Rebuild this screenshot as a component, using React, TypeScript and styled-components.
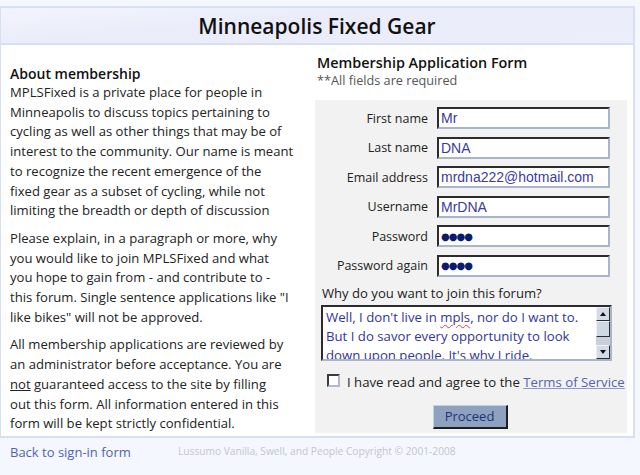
import React from 'react'
import styled, { createGlobalStyle } from 'styled-components'

const GlobalStyle = createGlobalStyle`
  body {
    margin: 0;
    background: #f4f7fd;
    font-family: 'Open Sans', 'Liberation Sans', sans-serif;
    font-size: 12.7px;
    color: #222;
  }
`

const Page = styled.div`
  width: 640px;
  height: 475px;
  padding-top: 6px;
  box-sizing: border-box;
`

const Header = styled.h1`
  margin: 0;
  width: 635px;
  height: 39px;
  box-sizing: border-box;
  border: 2px solid #d7dff2;
  border-left: 1px solid #d7dff2;
  background: linear-gradient(175deg, #f3f4fc 0%, #eaecfa 40%, #eceefb 100%);
  display: flex;
  align-items: center;
  justify-content: center;
  font-size: 21px;
  font-weight: 600;
  color: #111;
`

const Body = styled.div`
  display: flex;
  width: 635px;
  height: 393px;
  box-sizing: border-box;
  background: #fff;
  border: 2px solid #d7dff2;
  border-top: none;
  border-left: 1px solid #d7dff2;
`

const About = styled.div`
  flex: none;
  width: 314px;
  padding: 19px 0 0 9px;
  box-sizing: border-box;
  white-space: nowrap;
`

const Heading = styled.h2`
  margin: 0;
  font-size: 14px;
  font-weight: 600;
  color: #111;
  line-height: 19px;
`

const Para = styled.p`
  margin: 0 0 8px;
  font-size: 13.1px;
  line-height: 19.7px;
  color: #222;
`

const Underlined = styled.span`
  text-decoration: underline;
`

const FormColumn = styled.div`
  flex: 1;
  min-width: 0;
  padding: 8px 6px 0 0;
  display: flex;
  flex-direction: column;
`

const FormTitle = styled.h2`
  margin: 0 0 0 2px;
  font-size: 14.4px;
  font-weight: 600;
  color: #111;
  line-height: 20px;
`

const Note = styled.div`
  margin: 0 0 12px 2px;
  color: #555;
  line-height: 15px;
`

const Panel = styled.div`
  background: #f2f2f2;
  padding: 7px 8px 5px 6px;
  height: 333px;
  box-sizing: border-box;
`

const Fields = styled.div`
  display: grid;
  grid-template-columns: 107px 173px;
  column-gap: 9px;
  row-gap: 7.6px;
  align-items: center;
`

const Label = styled.label`
  text-align: right;
  font-size: 12.5px;
  color: #222;
`

const Field = styled.input<{ $secret?: boolean }>`
  height: 22px;
  width: 173px;
  box-sizing: border-box;
  border: 2px solid;
  border-color: #2c2c2c #a9b5c9 #a9b5c9 #2c2c2c;
  background: #fff;
  padding: 0 2px;
  font-family: ${p => (p.$secret ? "'DejaVu Sans', sans-serif" : "'Liberation Sans', Arial, sans-serif")};
  font-size: ${p => (p.$secret ? '10px' : '14px')};
  letter-spacing: ${p => (p.$secret ? '-1px' : '0')};
  color: ${p => (p.$secret ? '#0d1b6e' : '#3b3b9c')};
  outline: none;
`

const Question = styled.div`
  margin: 8px 0 4px 1px;
  font-size: 13.1px;
  color: #222;
  line-height: 16px;
`

const TextBox = styled.div`
  display: flex;
  width: 291px;
  height: 56px;
  box-sizing: border-box;
  border: 2px solid;
  border-color: #2c2c2c #a9b5c9 #a9b5c9 #2c2c2c;
  background: #fff;
  overflow: hidden;
`

const TextBody = styled.div`
  flex: 1;
  padding: 1px 3px 0;
  color: #34349a;
  line-height: 19px;
  font-size: 13.2px;
  white-space: nowrap;
  overflow: hidden;
`

const Typo = styled.span`
  text-decoration: underline wavy #e04040;
  text-decoration-thickness: 1px;
  text-underline-offset: 2px;
`

const ScrollBar = styled.div`
  width: 14px;
  display: flex;
  flex-direction: column;
  background: #c8d0dc;
`

const ScrollButton = styled.div<{ $down?: boolean }>`
  height: 14px;
  box-sizing: border-box;
  background: #d4dbe6;
  border: 1px solid;
  border-color: #eef1f6 #2c2c2c #2c2c2c #eef1f6;
  display: flex;
  align-items: center;
  justify-content: center;
  &::after {
    content: '';
    border-left: 3px solid transparent;
    border-right: 3px solid transparent;
    ${p => (p.$down ? 'border-top: 4px solid #111;' : 'border-bottom: 4px solid #111;')}
  }
`

const Thumb = styled.div`
  height: 16px;
  box-sizing: border-box;
  background: #cfd7e3;
  border: 1px solid;
  border-color: #eef1f6 #2c2c2c #2c2c2c #eef1f6;
`

const Track = styled.div`
  flex: 1;
`

const AgreeRow = styled.label`
  display: flex;
  align-items: center;
  gap: 7px;
  margin: 12px 0 0 6px;
  font-size: 13.2px;
  color: #222;
  white-space: nowrap;
`

const Check = styled.span`
  width: 13px;
  height: 13px;
  flex: none;
  box-sizing: border-box;
  border: 2px solid;
  border-color: #3c3c3c #b0bacb #b0bacb #3c3c3c;
  background: #fff;
  margin-top: -3px;
`

const Link = styled.a`
  color: #5363b0;
  text-decoration: underline;
  text-decoration-color: #8c97cc;
`

const ButtonRow = styled.div`
  display: flex;
  justify-content: center;
  margin-top: 14px;
`

const Button = styled.button`
  width: 75px;
  height: 24px;
  box-sizing: border-box;
  background: #8ea2bf;
  border: 1px solid;
  border-color: #c4cfdf #1e1e1e #1e1e1e #c4cfdf;
  border-width: 1px 2px 2px 1px;
  color: #23317a;
  font-family: 'Open Sans', 'Liberation Sans', sans-serif;
  font-size: 13px;
  padding: 0;
`

const Footer = styled.div`
  display: flex;
  align-items: center;
  height: 28px;
  padding-left: 10px;
`

const BackLink = styled.a`
  color: #5262b2;
  font-size: 13px;
  text-decoration: none;
  width: 168px;
`

const Copyright = styled.span`
  color: #c2c6d0;
  font-size: 10.2px;
  margin-top: -3px;
`

export default function App() {
  return (
    <Page>
      <GlobalStyle />
      <Header>Minneapolis Fixed Gear</Header>
      <Body>
        <About>
          <Heading>About membership</Heading>
          <Para>
            MPLSFixed is a private place for people in
            <br />
            Minneapolis to discuss topics pertaining to
            <br />
            cycling as well as other things that may be of
            <br />
            interest to the community. Our name is meant
            <br />
            to recognize the recent emergence of the
            <br />
            fixed gear as a subset of cycling, while not
            <br />
            limiting the breadth or depth of discussion
          </Para>
          <Para>
            Please explain, in a paragraph or more, why
            <br />
            you would like to join MPLSFixed and what
            <br />
            you hope to gain from - and contribute to -
            <br />
            this forum. Single sentence applications like "I
            <br />
            like bikes" will not be approved.
          </Para>
          <Para>
            All membership applications are reviewed by
            <br />
            an administrator before acceptance. You are
            <br />
            <Underlined>not</Underlined> guaranteed access to the site by filling
            <br />
            out this form. All information entered in this
            <br />
            form will be kept strictly confidential.
          </Para>
        </About>
        <FormColumn>
          <FormTitle>Membership Application Form</FormTitle>
          <Note>**All fields are required</Note>
          <Panel>
            <Fields>
              <Label>First name</Label>
              <Field defaultValue="Mr" />
              <Label>Last name</Label>
              <Field defaultValue="DNA" />
              <Label>Email address</Label>
              <Field defaultValue="mrdna222@hotmail.com" />
              <Label>Username</Label>
              <Field defaultValue="MrDNA" />
              <Label>Password</Label>
              <Field $secret defaultValue="●●●●" />
              <Label>Password again</Label>
              <Field $secret defaultValue="●●●●" />
            </Fields>
            <Question>Why do you want to join this forum?</Question>
            <TextBox>
              <TextBody>
                Well, I don't live in <Typo>mpls</Typo>, nor do I want to.
                <br />
                But I do savor every opportunity to look
                <br />
                down upon people. It's why I ride.
              </TextBody>
              <ScrollBar>
                <ScrollButton />
                <Thumb />
                <Track />
                <ScrollButton $down />
              </ScrollBar>
            </TextBox>
            <AgreeRow>
              <Check />
              <span>
                I have read and agree to the <Link href="#">Terms of Service</Link>
              </span>
            </AgreeRow>
            <ButtonRow>
              <Button>Proceed</Button>
            </ButtonRow>
          </Panel>
        </FormColumn>
      </Body>
      <Footer>
        <BackLink href="#">Back to sign-in form</BackLink>
        <Copyright>Lussumo Vanilla, Swell, and People Copyright © 2001-2008</Copyright>
      </Footer>
    </Page>
  )
}
